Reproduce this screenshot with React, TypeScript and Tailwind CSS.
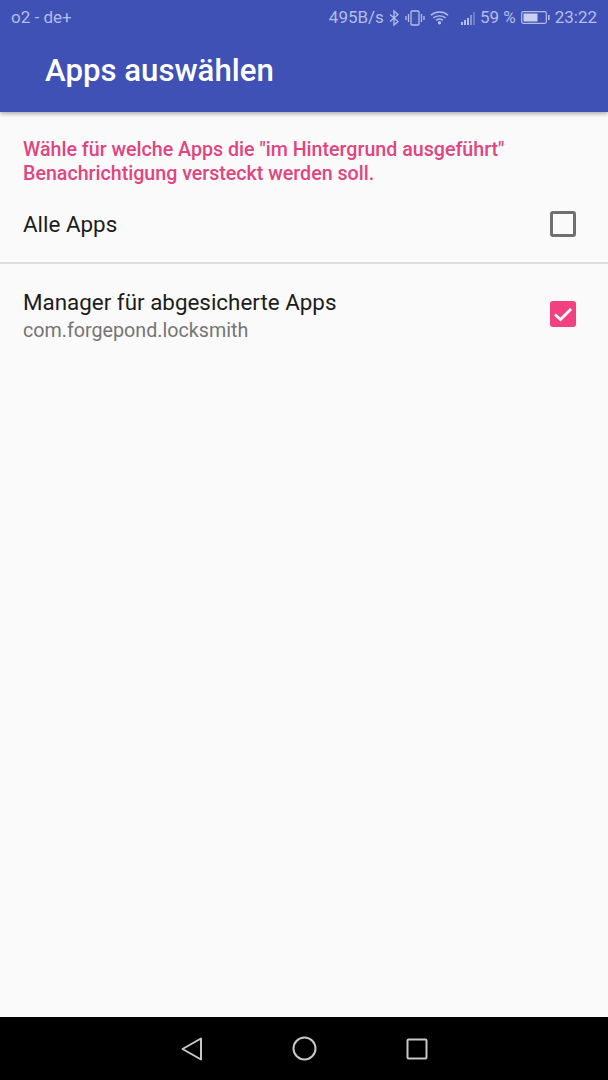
export default function App() {
  return (
    <div className="flex h-[1080px] w-[608px] flex-col overflow-hidden bg-[#fafafa] font-['Roboto',sans-serif]">
      <header className="relative z-10 h-[112px] shrink-0 bg-[#3f51b5] shadow-[0_2px_4px_rgba(0,0,0,0.3)]">
        <div className="flex h-[35px] items-center justify-between pl-[11px] pr-[11px] text-[17px] text-[#b4bde8]">
          <span>o2 - de+</span>
          <div className="flex items-center">
            <span>495B/s</span>
            <svg className="ml-[5px]" width="11" height="18" viewBox="0 0 11 16" fill="none" stroke="#b4bde8" strokeWidth="1.3">
              <path d="M1 4.5l8 7-4 3.5V1l4 3.5-8 7" />
            </svg>
            <svg className="ml-[5px]" width="20" height="18" viewBox="0 0 20 16" fill="none" stroke="#b4bde8" strokeWidth="1.3">
              <rect x="6" y="1" width="8" height="14" rx="1" />
              <path d="M3.500 4v8M1 6v4M16.500 4v8M19 6v4" />
            </svg>
            <svg className="ml-[5px]" width="19" height="17" viewBox="0 0 20 16" fill="none" stroke="#b4bde8" strokeWidth="1.500">
              <path d="M1 5.500c5-4.500 13-4.500 18 0M3.500 8.500c3.500-3 9.500-3 13 0M6.500 11c2-1.500 5-1.500 7 0" />
              <circle cx="10" cy="13.500" r="1" fill="#b4bde8" />
            </svg>
            <svg className="ml-[11px]" width="16" height="18" viewBox="0 0 16 16" fill="#b4bde8">
              <rect x="1" y="12" width="2" height="3" />
              <rect x="4" y="10" width="2" height="5" />
              <rect x="7" y="8" width="2" height="7" />
              <rect x="10" y="5" width="2" height="10" opacity="0.6" />
              <rect x="13" y="2" width="2" height="13" opacity="0.4" />
            </svg>
            <span className="ml-[4px]">59 %</span>
            <svg className="ml-[5px]" width="29" height="15" viewBox="0 0 29 14" fill="none">
              <rect x="0.700" y="1.200" width="24.600" height="11.600" rx="1.500" stroke="#b4bde8" strokeWidth="1.200" />
              <rect x="2.500" y="3" width="14" height="8" fill="#c9cff0" />
              <rect x="27" y="4.500" width="1.600" height="5" fill="#b4bde8" />
            </svg>
            <span className="ml-[5px]">23:22</span>
          </div>
        </div>
        <h1 className="pl-[45px] pt-[17px] text-[31.200px] font-medium leading-[38px] text-white">Apps auswählen</h1>
      </header>

      <main className="flex-1">
        <p className="pl-[23px] pt-[26px] text-[19.640px] font-medium leading-[24px] text-[#e0457f]">
          Wähle für welche Apps die "im Hintergrund ausgeführt"
          <br />
          Benachrichtigung versteckt werden soll.
        </p>
        <div className="flex h-[78px] items-center justify-between border-b-2 border-[#dedede] pl-[23px] pr-[32px]">
          <span className="pt-[1px] text-[22.400px] text-[#1c1c1c]">Alle Apps</span>
          <span className="h-[26px] w-[26px] rounded-[3px] border-[3px] border-[#6f6f6f]" />
        </div>
        <div className="flex items-start justify-between pl-[23px] pr-[32px] pt-[24px]">
          <div>
            <div className="text-[22.400px] leading-[28px] text-[#1c1c1c]">Manager für abgesicherte Apps</div>
            <div className="text-[19.700px] leading-[29px] text-[#757575]">com.forgepond.locksmith</div>
          </div>
          <span className="mt-[13px] flex h-[26px] w-[26px] items-center justify-center rounded-[3px] bg-[#f2417f]">
            <svg width="24" height="24" viewBox="0 0 24 24" fill="none" stroke="#ffffff" strokeWidth="2.800">
              <path d="M4 12.500l5.500 5L20 7" />
            </svg>
          </span>
        </div>
      </main>

      <nav className="flex h-[63px] shrink-0 items-center gap-[89px] bg-black pl-[181px]">
        <svg width="22" height="26" viewBox="0 0 22 26" fill="none" stroke="#c8c8c8" strokeWidth="2" strokeLinejoin="round">
          <path d="M20 2.500v21L1.500 13z" />
        </svg>
        <svg width="25" height="25" viewBox="0 0 25 25" fill="none" stroke="#c8c8c8" strokeWidth="2">
          <circle cx="12.500" cy="12.500" r="11" />
        </svg>
        <svg width="22" height="22" viewBox="0 0 22 22" fill="none" stroke="#c8c8c8" strokeWidth="2" strokeLinejoin="round">
          <rect x="1.500" y="1.500" width="19" height="19" rx="1" />
        </svg>
      </nav>
    </div>
  );
}
